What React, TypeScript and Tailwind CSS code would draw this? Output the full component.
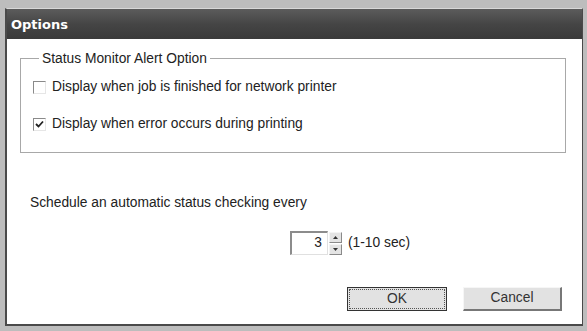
import React from "react";

function CheckBox({ checked }: { checked?: boolean }) {
  return (
    <div className="w-[13px] h-[13px] border-t border-l border-[#8a8a8a] border-b border-r border-b-[#e6e6e6] border-r-[#e6e6e6] bg-white flex items-center justify-center shrink-0">
      {checked ? (
        <svg width="9" height="9" viewBox="0 0 9 9">
          <path d="M1 4 L3.5 6.5 L8 1.5" stroke="#222" strokeWidth="1.8" fill="none" />
        </svg>
      ) : null}
    </div>
  );
}

export default function App() {
  return (
    <div
      className="w-[587px] h-[331px] bg-[#bdbdbd] pt-[8px] pl-[5px] pr-[4px] pb-[5px] flex"
      style={{ fontFamily: '"Liberation Sans", Arial, sans-serif' }}
    >
      <div className="flex-1 flex flex-col bg-white border-l-2 border-b-2 border-r border-[#4a4a4a] border-t border-t-[#d8d8d8]">
        <div className="h-[30px] bg-gradient-to-b from-[#5c5c5c] via-[#454545] to-[#3a3a3a] flex items-center pl-[4px] shrink-0">
          <span
            className="text-white text-[13px] font-bold leading-none"
            style={{ fontFamily: '"DejaVu Sans", Verdana, sans-serif' }}
          >
            Options
          </span>
        </div>
        <div className="flex-1 flex flex-col pl-[13px] pr-[16px] pt-[12px] text-[13.8px] text-[#222]">
          <fieldset className="border border-[#a8a8a8] h-[102px] pl-[12px] flex flex-col">
            <legend className="ml-[6px] px-[3px] leading-[15px]">Status Monitor Alert Option</legend>
            <div className="flex items-center gap-[6px] mt-[14px] h-[15px]">
              <CheckBox />
              <span>Display when job is finished for network printer</span>
            </div>
            <div className="flex items-center gap-[6px] mt-[22px] h-[15px]">
              <CheckBox checked />
              <span>Display when error occurs during printing</span>
            </div>
          </fieldset>
          <div className="mt-[42px] pl-[10px] leading-[15px]">Schedule an automatic status checking every</div>
          <div className="flex items-center mt-[21px] ml-[270px] h-[24px]">
            <div className="w-[38px] h-[24px] border-t-2 border-l-2 border-[#8c8c8c] border-b border-r border-b-[#e0e0e0] border-r-[#e0e0e0] flex items-center justify-end pr-[5px] bg-white">
              <span>3</span>
            </div>
            <div className="flex flex-col ml-[1px] gap-[1px]">
              <div className="w-[13px] h-[11px] bg-[#e4e4e4] border border-[#f4f4f4] border-b-[#8a8a8a] border-r-[#8a8a8a] flex items-center justify-center">
                <svg width="5" height="3" viewBox="0 0 5 3"><path d="M2.5 0 L5 3 L0 3Z" fill="#333" /></svg>
              </div>
              <div className="w-[13px] h-[11px] bg-[#e4e4e4] border border-[#f4f4f4] border-b-[#8a8a8a] border-r-[#8a8a8a] flex items-center justify-center">
                <svg width="5" height="3" viewBox="0 0 5 3"><path d="M0 0 L5 0 L2.5 3Z" fill="#333" /></svg>
              </div>
            </div>
            <span className="ml-[6px]">(1-10 sec)</span>
          </div>
          <div className="flex mt-[32px] ml-[327px] gap-[16px]">
            <div className="w-[100px] h-[24px] border border-[#333] bg-[#e2e2e2] p-[1px]">
              <div className="w-full h-full border border-dotted border-[#555] flex items-center justify-center text-[#333]">OK</div>
            </div>
            <div className="w-[99px] h-[24px] bg-[#e2e2e2] border border-[#f6f6f6] border-b-2 border-r-2 border-b-[#777] border-r-[#777] flex items-center justify-center text-[#333]">
              Cancel
            </div>
          </div>
        </div>
      </div>
    </div>
  );
}
